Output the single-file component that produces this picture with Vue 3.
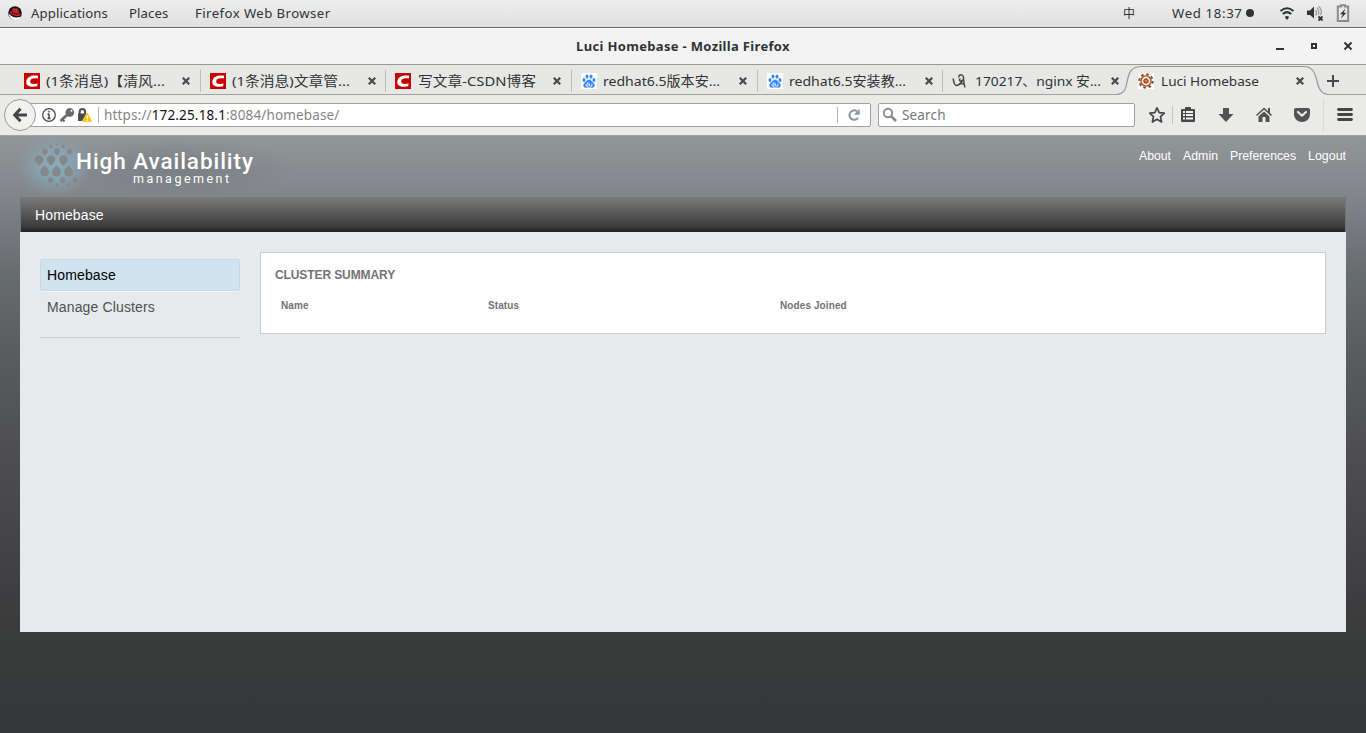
<script setup>
import { ref } from 'vue'

const activeTab = ref(6)

const tabs = [
  { icon: 'csdn', title: '(1条消息)【清风...', width: 119 },
  { icon: 'csdn', title: '(1条消息)文章管...', width: 118 },
  { icon: 'csdn', title: '写文章-CSDN博客', width: 118 },
  { icon: 'paw', title: 'redhat6.5版本安...', width: 117 },
  { icon: 'paw', title: 'redhat6.5安装教...', width: 117 },
  { icon: 'swirl', title: '170217、nginx 安...', width: 126 },
  { icon: 'gear', title: 'Luci Homebase', width: 98 },
]

const userLinks = [
  { label: 'About', width: 32 },
  { label: 'Admin', width: 35 },
  { label: 'Preferences', width: 66 },
  { label: 'Logout', width: 38 },
]

// Teardrop marks of the product logo: x, y, radius, tip direction
const drops = [
  [57, 144, 1, 1], [51, 146.5, 1.6, 1], [63, 146.5, 1.6, 1],
  [45, 151.5, 2.9, 1], [57, 151.5, 2.9, 1], [69.5, 151.5, 2.6, 1],
  [39, 159.5, 4.3, 1], [51, 159.5, 4.3, 1], [63.5, 159.5, 4.3, 1],
  [44.5, 172, 4.5, -1], [56.5, 172, 4.5, -1], [68.5, 172, 4.5, -1],
  [50.5, 180.5, 2.8, -1], [62.5, 180.5, 2.8, -1], [75, 180.5, 2.6, -1],
  [57, 185, 1.6, -1], [69, 185, 1.6, -1],
]

function dropPath([x, y, r, d]) {
  const tip = y + d * r * 1.45
  return `M${x - r} ${y}A${r} ${r} 0 0 ${d > 0 ? 1 : 0} ${x + r} ${y}Q${x + r} ${y + d * r * 0.6} ${x} ${tip}Q${x - r} ${y + d * r * 0.6} ${x - r} ${y}Z`
}
</script>

<template>
  <div class="desktop">
    <header class="panel">
      <svg class="hat" width="16" height="16" viewBox="0 0 16 16">
        <circle cx="8" cy="8" r="6.8" fill="#151515" />
        <path d="M1.5 8.5Q6 13 10 12.5L13.500 11.800Q12 15 8 15Q3 14.600 1.500 8.500Z" fill="#fff" />
        <path d="M2.4 7.5Q4 6 5 6.4L5.6 3.4Q7 2.4 8.3 3.4Q11 3 11.3 4.5L12 8Q14 9 13.4 10.3Q11 12 6.5 10.2Q3 9.2 2.4 7.5Z" fill="#c9242a" />
        <path d="M5 6.6Q7.5 9.2 12 8.2L12 9Q8 10.2 4.7 7.7Z" fill="#111" />
      </svg>
      <span class="apps">Applications</span>
      <span class="places">Places</span>
      <span class="browser">Firefox Web Browser</span>
      <span class="spacer"></span>
      <span class="ime">中</span>
      <span class="clock">Wed 18:37</span>
      <i class="dot"></i>
      <svg class="status" width="86" height="20" viewBox="0 0 86 20">
        <g fill="none" stroke="#2e3436" stroke-width="2">
          <path d="M15.5 8Q22 2.5 28.5 8" />
          <path d="M17.8 11Q22 7.3 26.2 11" />
        </g>
        <path d="M19.8 14Q22 11.8 24.2 14L22 17Z" fill="#2e3436" />
        <path d="M42 7.5h3L49 3.5v12L45 12h-3z" fill="#2e3436" />
        <g fill="none" stroke="#a0a3a4" stroke-width="1.4">
          <path d="M50.5 7Q52.5 9.5 50.5 12.5" />
          <path d="M52 4.7Q55 9 53 12" />
          <path d="M53.8 3.3Q57.8 8 55.5 12" />
        </g>
        <path d="M53.5 13.5l4 4M57.5 13.5l-4 4" stroke="#2e3436" stroke-width="1.8" />
        <path d="M76 3.5v-1.3h4v1.3h3.2v14.6h-10.4V3.5z" fill="none" stroke="#888b8c" stroke-width="2" />
        <path d="M80.8 5.3L75 11.2h2.8l-2 4.6 5.6-6h-2.8z" fill="#2e3436" />
      </svg>
    </header>

    <div class="titlebar">
      <strong>Luci Homebase - Mozilla Firefox</strong>
      <svg class="window-buttons" width="86" height="20" viewBox="0 0 86 20" fill="none" stroke="#2e3436">
        <path d="M6 12h8" stroke-width="2" />
        <path d="M42 7h4v4h-4z" stroke-width="2" />
        <path d="M74.5 5.5l7 7M81.5 5.5l-7 7" stroke-width="2" />
      </svg>
    </div>

    <nav class="tabs">
      <div
        v-for="(tab, i) in tabs"
        :key="i"
        class="tab"
        :class="{ active: i === activeTab, 'before-active': i === activeTab - 1 }"
        @click="activeTab = i"
      >
        <svg v-if="i === activeTab" class="tab-shape" width="216" height="30" viewBox="0 0 216 30">
          <path d="M-1 30V29.5C6 29.5 8.5 26 10 17C12 7 14 1.5 25 1.5H186C196 1.5 198 8 200 16C202 25 205 29.5 212 29.5V30Z" fill="#eaeae8" />
          <path d="M-1 29.5C6 29.5 8.5 26 10 17C12 7 14 1.5 25 1.5H186C196 1.5 198 8 200 16C202 25 205 29.5 212 29.5" fill="none" stroke="#92999e" stroke-width="1.2" />
        </svg>
        <svg class="favicon" width="16" height="16" viewBox="0 0 16 16">
          <template v-if="tab.icon === 'csdn'">
            <path d="M0 0h16v16H0z" fill="#c90000" />
            <path d="M14.2 2.8C8 1.8 3 3.6 2.3 8.4C1.7 13.6 7.5 14.3 13.2 13.2L13.6 10.6C9 11.4 5.9 11 6.2 8.2C6.6 5.4 9.5 4.8 13.8 5.6Z" fill="#fff" />
          </template>
          <template v-else-if="tab.icon === 'paw'">
            <path d="M0 0h16v16H0z" fill="#fff" />
            <g fill="#3388ff">
              <ellipse cx="3" cy="7" rx="1.5" ry="2" />
              <ellipse cx="6" cy="3.6" rx="1.5" ry="2.1" />
              <ellipse cx="10" cy="3.6" rx="1.5" ry="2.1" />
              <ellipse cx="13" cy="7" rx="1.5" ry="2" />
              <path d="M8 6.5C6 6.6 5.4 8.5 3.4 10C1.4 12 2.5 15 5 14.7Q8 14 11 14.7C13.7 15 14.5 12 12.6 10C10.6 8.5 10.2 6.5 8 6.5Z" />
            </g>
            <path d="M7 9v4.3H5.8Q4.8 13.2 4.9 11.9Q5 10.7 7 10.8M8.5 10.5V12.5Q8.5 13.2 9.3 13.2H10.9V10.5" fill="none" stroke="#fff" stroke-width="0.8" />
          </template>
          <g v-else-if="tab.icon === 'swirl'" fill="none" stroke="#464642">
            <path d="M1.2 5.5Q2 12.5 4.5 12.5Q8 12 10.5 7.5" stroke-width="1.6" />
            <path d="M6.6 4.5Q7 1.5 9.5 1.8Q12 2.5 11.5 6Q10 8.500 8 7.800Q6.500 6.800 8.500 5.500M11.500 5Q11.700 10 13 14.500M8 11Q10.500 9.500 12.500 12" stroke-width="1.4" />
          </g>
          <template v-else>
            <path d="M0 0h16v16H0z" fill="#fff" />
            <circle cx="8" cy="8" r="6.7" fill="none" stroke="#8a4a2c" stroke-width="2" stroke-dasharray="2.6 2.662" />
            <circle cx="8" cy="8" r="5.1" fill="#f8eee6" stroke="#a0522d" stroke-width="1.4" />
            <circle cx="8" cy="8" r="2.3" fill="#d4570d" stroke="#852e0b" stroke-width="0.8" />
            <circle cx="8" cy="7.7" r="0.9" fill="#ff9c3c" />
          </template>
        </svg>
        <svg class="tab-title" :width="tab.width + 2" height="22">
          <text x="0" y="15.5" :textLength="tab.width" lengthAdjust="spacingAndGlyphs">{{ tab.title }}</text>
        </svg>
        <svg class="close" width="10" height="10" viewBox="0 0 10 10">
          <path d="M1.8 1.8l6.4 6.4M8.2 1.8l-6.4 6.4" stroke="#474c4e" stroke-width="2.3" />
        </svg>
      </div>
      <svg class="new-tab" width="14" height="14" viewBox="0 0 14 14">
        <path d="M7 1v12M1 7h12" stroke="#464b4c" stroke-width="2" />
      </svg>
    </nav>

    <div class="toolbar">
      <div class="address">
        <svg class="identity" width="52" height="18" viewBox="0 0 52 18">
          <circle cx="8" cy="9" r="6.3" fill="none" stroke="#4a4a4a" stroke-width="1.3" />
          <path d="M8 8v4.5M6.5 8H8M6.5 12.5h3M8 4.8v1.7" stroke="#4a4a4a" stroke-width="1.5" />
          <path d="M19.5 15L27 8" stroke="#6b6b6b" stroke-width="2.8" />
          <path d="M21.5 13.5l2 2" stroke="#6b6b6b" stroke-width="2" />
          <circle cx="28.8" cy="6.5" r="4.4" fill="#6b6b6b" />
          <circle cx="30.5" cy="4.8" r="1" fill="#fff" />
          <path d="M38.7 8V5.6Q38.7 3 41.4 3Q44.1 3 44.1 5.6V8" fill="none" stroke="#4d4d4d" stroke-width="2" />
          <path d="M37 7.5h9v7.5h-9z" fill="#4d4d4d" />
          <path d="M46.3 6L51.5 16H41Z" fill="#ffbf00" stroke="#fff" stroke-width="0.5" />
          <path d="M46.3 9.5v3.3M46.3 13.8v1.2" stroke="#fff" stroke-width="1.3" />
        </svg>
        <i class="divider identity-divider"></i>
        <span class="url">https://<b>172.25.18.1</b>:8084/homebase/</span>
        <i class="divider reload-divider"></i>
        <svg class="reload" width="14" height="14" viewBox="0 0 14 14">
          <path d="M11 9.8A4.7 4.7 0 1 1 10 3.3" fill="none" stroke="#8995a1" stroke-width="2" />
          <path d="M12.7 0.8v5.9H6.8Z" fill="#8995a1" />
        </svg>
      </div>
      <button class="back" aria-label="Back">
        <svg width="16" height="16" viewBox="0 0 16 16" fill="none" stroke="#454545" stroke-width="3">
          <path d="M8.5 1.7L2.7 8L8.5 14.3M3 8H15" />
        </svg>
      </button>
      <div class="search">
        <svg width="16" height="16" viewBox="0 0 16 16" fill="none" stroke="#8e8e8e">
          <circle cx="6" cy="6" r="4.2" stroke-width="2" />
          <path d="M9 9l5 5" stroke-width="2.7" />
        </svg>
        <span>Search</span>
      </div>
      <svg class="tools" width="226" height="40" viewBox="0 0 226 40">
        <path d="M17 12.8L19.2 17.6L24.3 18.2L20.5 21.7L21.6 27L17 24.3L12.4 27L13.5 21.7L9.7 18.2L14.8 17.6Z" fill="none" stroke="#474747" stroke-width="1.7" stroke-linejoin="round" />
        <path d="M32.5 11v18" stroke="#c5c5c3" />
        <path d="M42 14h3v-1q0-1 1-1h4q1 0 1 1v1h3q1 0 1 1v11q0 1-1 1H42q-1 0-1-1V15q0-1 1-1z" fill="#474747" />
        <path d="M43 17h2M46 17h7M43 20h2M46 20h7M43 23.5h2M46 23.5h7" stroke="#f2f2f1" stroke-width="2" />
        <path d="M83 13h6v6h4.5L86 27L78.5 19H83Z" fill="#525252" />
        <path d="M116.5 20.5L124 13.5L131.5 20.5" fill="none" stroke="#525252" stroke-width="1.6" />
        <path d="M128 13h2v5h-2zM118.5 21.5L124 16.5L129.5 21.5V27H125.5V22H122.5V27H118.5Z" fill="#525252" />
        <path d="M156 13h12q2 0 2 2v4c0 5-4 8-8 8s-8-3-8-8v-4q0-2 2-2z" fill="#525252" />
        <path d="M158 17l4 3.7L166 17" fill="none" stroke="#eaeae8" stroke-width="2.2" stroke-linecap="round" stroke-linejoin="round" />
        <path d="M183.5 3v34" stroke="#d9d9d7" />
        <path d="M198.5 14.5h13M198.5 19.5h13M198.5 24.5h13" stroke="#454545" stroke-width="2.8" stroke-linecap="round" />
      </svg>
    </div>

    <main class="page">
      <div class="masthead">
        <svg class="logo" width="300" height="60" viewBox="0 136 300 60">
          <defs>
            <radialGradient id="glow">
              <stop offset="0" stop-color="#8ab3c7" stop-opacity="0.85" />
              <stop offset="0.45" stop-color="#87aec1" stop-opacity="0.65" />
              <stop offset="0.75" stop-color="#87a8b8" stop-opacity="0.28" />
              <stop offset="1" stop-color="#87a8b8" stop-opacity="0" />
            </radialGradient>
            <radialGradient id="shade">
              <stop offset="0.1" stop-color="#6f7579" stop-opacity="0.55" />
              <stop offset="1" stop-color="#6f7579" stop-opacity="0" />
            </radialGradient>
          </defs>
          <ellipse cx="175" cy="168" rx="120" ry="30" fill="url(#shade)" />
          <ellipse cx="55" cy="166" rx="38" ry="31" fill="url(#glow)" />
          <path v-for="(drop, i) in drops" :key="i" :d="dropPath(drop)" fill="#85888b" />
          <text class="brand" x="76" y="168.5" textLength="177">High Availability</text>
          <text class="brand-sub" x="133" y="183" textLength="96">management</text>
        </svg>
        <ul class="user-links">
          <li v-for="link in userLinks" :key="link.label">
            <svg :width="link.width" height="18">
              <text x="0" y="14" :textLength="link.width" lengthAdjust="spacingAndGlyphs">{{ link.label }}</text>
            </svg>
          </li>
        </ul>
      </div>
      <div class="navbar">Homebase</div>
      <div class="content">
        <aside class="sidebar">
          <a class="side-link selected">Homebase</a>
          <a class="side-link">Manage Clusters</a>
        </aside>
        <section class="summary">
          <h2>CLUSTER SUMMARY</h2>
          <div class="columns">
            <span>Name</span>
            <span>Status</span>
            <span>Nodes Joined</span>
          </div>
        </section>
      </div>
    </main>
  </div>
</template>

<style>
body {
  overflow: hidden;
}
</style>

<style scoped>
.desktop {
  display: flex;
  flex-direction: column;
  width: 1366px;
  height: 733px;
  overflow: hidden;
  color: #2e3436;
  font: 13.5px/20px 'Noto Sans', 'Noto Sans CJK SC', sans-serif;
}

.desktop * {
  box-sizing: border-box;
}

svg {
  display: block;
  flex-shrink: 0;
}

.panel {
  display: flex;
  align-items: center;
  height: 28px;
  padding: 0 15px 1px 7px;
  border-bottom: 1px solid #656866;
  background: linear-gradient(#ededed, #e0e0e0);
  font-size: 13.2px;
  letter-spacing: 0.1px;
  white-space: nowrap;
}

.apps {
  width: 98px;
  margin-left: 8px;
}

.places {
  width: 66px;
}

.browser {
  letter-spacing: 0.42px;
}

.spacer {
  flex: 1;
}

.ime {
  margin-right: 37px;
  font-family: 'Noto Sans CJK SC', sans-serif;
  font-size: 12px;
}

.clock {
  width: 72px;
  letter-spacing: 0.65px;
}

.dot {
  width: 8px;
  height: 8px;
  margin: 0 11px 0 2px;
  border-radius: 50%;
  background: #2e3436;
}

.titlebar {
  display: flex;
  justify-content: center;
  align-items: center;
  position: relative;
  height: 37px;
  border-bottom: 1px solid #979b8f;
  background: #f3f3f3;
  box-shadow: inset 0 1px #fff;
  font-size: 13px;
  letter-spacing: 0.33px;
}

.window-buttons {
  position: absolute;
  top: 9px;
  right: 10px;
}

.tabs {
  display: flex;
  height: 30px;
  padding-left: 15px;
  border-bottom: 1px solid #a1a1a0;
  background: #e7e7e5;
}

.tab {
  display: flex;
  position: relative;
  width: 185.7px;
  height: 29px;
  padding: 8px 9.6px 0 9px;
}

.tab::after {
  content: '';
  position: absolute;
  top: 5px;
  right: 0;
  width: 1px;
  height: 22px;
  background: #bdbebc;
}

.tab.active::after,
.tab.before-active::after {
  display: none;
}

.tab-shape {
  position: absolute;
  top: 0;
  left: -12px;
}

.favicon,
.tab-title,
.close {
  position: relative;
}

.tab-title {
  margin: -3px 0 0 6.4px;
}

.tab-title text {
  fill: #2e3436;
  font-size: 13.2px;
}

.close {
  margin: 3px 0 0 auto;
}

.new-tab {
  margin: 9px 0 0 11px;
}

.toolbar {
  display: flex;
  align-items: center;
  position: relative;
  height: 41px;
  padding-left: 20px;
  border-bottom: 1px solid #a1a49a;
  background: #eaeae8;
}

.back {
  display: flex;
  justify-content: center;
  align-items: center;
  position: absolute;
  top: 4px;
  left: 4px;
  width: 32px;
  height: 32px;
  padding: 0;
  border: 1px solid #999b99;
  border-radius: 50%;
  background: #f1f1f0;
}

.address,
.search {
  display: flex;
  align-items: center;
  height: 24px;
  border: 1px solid #a0a1a0;
  border-radius: 2px;
  background: #fff;
}

.address {
  width: 851px;
  padding-left: 20px;
}

.divider {
  width: 1px;
  height: 16px;
  background: #b3b3b3;
}

.identity-divider {
  margin-left: 5px;
}

.url {
  margin-left: 5px;
  color: #858585;
  font-size: 13.5px;
  letter-spacing: 0.15px;
}

.url b {
  color: #111;
  font-weight: 400;
}

.reload-divider {
  margin-left: auto;
}

.reload {
  margin: 0 9px;
}

.search {
  width: 257px;
  margin-left: 7px;
  padding-left: 3px;
  gap: 4px;
  color: #77797a;
  letter-spacing: 0.15px;
}

.tools {
  margin-left: 5px;
}

.page {
  flex: 1;
  padding: 0 20px;
  background: linear-gradient(
    #919699,
    #82868a 10%,
    #73767b 17%,
    #666b6d 24%,
    #585b5d 38%,
    #4f4f52 52%,
    #474749 64%,
    #3e3e40 77%,
    #3a3b3b 84%,
    #353638
  );
  font-family: 'Liberation Sans', sans-serif;
}

.masthead {
  display: flex;
  justify-content: space-between;
  height: 60px;
}

.logo {
  margin-left: -20px;
}

.brand,
.brand-sub {
  fill: #fff;
  font-family: Roboto, sans-serif;
}

.brand {
  font-size: 22.5px;
  font-weight: 500;
}

.brand-sub {
  font-size: 12.5px;
}

.user-links {
  display: flex;
  gap: 12px;
  margin: 10px 0 0;
  padding: 0;
  list-style: none;
}

.user-links text {
  fill: #fff;
  font-size: 12px;
}

.navbar {
  height: 36px;
  padding-left: 14px;
  border: solid #737577;
  border-width: 1px 1px 0;
  border-top-color: #858688;
  background: linear-gradient(#7b7b7b, #3c3c3c 84%, #202020);
  color: #fff;
  font-size: 14px;
  letter-spacing: 0.12px;
  line-height: 37px;
}

.content {
  display: flex;
  align-items: flex-start;
  gap: 20px;
  height: 400px;
  padding: 20px;
  background: #e6eaed;
}

.sidebar {
  width: 200px;
  height: 79px;
  margin-top: 7px;
  border-bottom: 1px solid #c7cdd1;
}

.side-link {
  display: block;
  height: 32px;
  padding-left: 6px;
  border: 1px solid transparent;
  color: #505050;
  font-size: 14px;
  letter-spacing: 0.14px;
  line-height: 30px;
}

.side-link.selected {
  border-color: #bfdce8;
  border-radius: 2px;
  background: #d1e3ef;
  box-shadow: 0 1px #f4f6f7;
  color: #000;
}

.summary {
  flex: 1;
  height: 82px;
  padding: 13px 14px;
  border: 1px solid #c9cdd0;
  background: #fff;
}

.summary h2 {
  margin: 0;
  color: #737373;
  font-size: 12px;
  letter-spacing: -0.1px;
  line-height: 18px;
}

.columns {
  display: grid;
  grid-template-columns: 207px 292px 1fr;
  margin-top: 15px;
  padding-left: 6px;
  color: #737373;
  font-size: 10px;
  font-weight: 700;
  letter-spacing: 0.1px;
  line-height: 14px;
}
</style>
